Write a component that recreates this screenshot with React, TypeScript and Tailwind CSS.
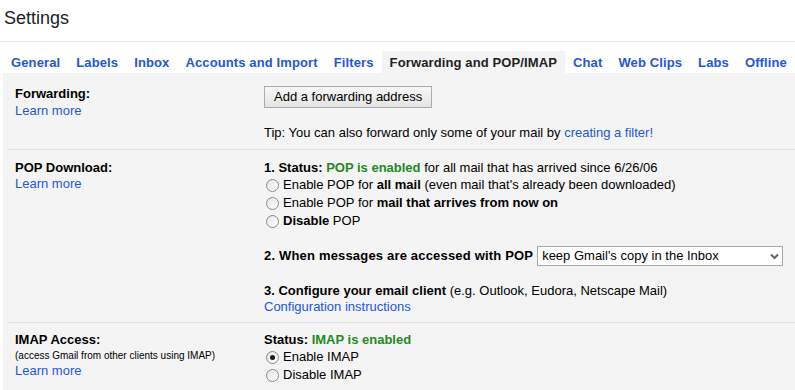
import * as React from 'react';

const tabs = [
	'General',
	'Labels',
	'Inbox',
	'Accounts and Import',
	'Filters',
	'Forwarding and POP/IMAP',
	'Chat',
	'Web Clips',
	'Labs',
	'Offline',
];

const Radio = ({ checked, children }: { checked?: boolean; children: React.ReactNode }) => (
	<div className="flex h-[18px] items-center">
		<span className="ml-[2px] flex h-[13px] w-[13px] items-center justify-center rounded-full border border-[#8a8a8a] bg-gradient-to-br from-[#e4e4e4] to-white">
			{checked && <span className="h-[5px] w-[5px] rounded-full bg-[#1a1a1a]" />}
		</span>
		<span className="ml-[4px] leading-[16px]">{children}</span>
	</div>
);

const Link = ({ children }: { children: React.ReactNode }) => (
	<span className="cursor-pointer text-[#2457d6]">{children}</span>
);

const Sep = () => <div className="ml-[4px] h-px bg-[#e2e2e2]" />;

export default function App() {
	return (
		<div className="h-[390px] w-[795px] overflow-hidden bg-white font-['Liberation_Sans',Arial,sans-serif] text-[13px] text-black">
			<h1 className="pl-[4px] pt-[8px] text-[18px] leading-[21px] text-[#222]">Settings</h1>
			<div className="mt-[12px] h-px bg-[#e5e5e5]" />

			<div className="ml-[3px] mt-[9px] flex tracking-[0.12px]">
				{tabs.map((t) => (
					<div
						key={t}
						className={
							t === 'Forwarding and POP/IMAP'
								? 'bg-[#f4f4f4] px-2 pb-[2px] pt-[4px] font-bold leading-[16px] text-[#222]'
								: 'cursor-pointer px-2 pb-[2px] pt-[4px] font-bold leading-[16px] text-[#2457d6]'
						}>
						{t}
					</div>
				))}
			</div>

			<div className="ml-[3px] bg-[#f4f4f4]">
				{/* forwarding */}
				<div className="grid grid-cols-[261px_1fr] pb-[8px] pt-[13px]">
					<div className="pl-[12px]">
						<div className="font-bold leading-[16px]">Forwarding:</div>
						<div className="leading-[17px]">
							<Link>Learn more</Link>
						</div>
					</div>
					<div>
						<button className="h-[22px] border border-[#ababab] bg-gradient-to-b from-[#f7f7f7] to-[#e4e4e4] px-[9px] leading-[16px] text-black">
							Add a forwarding address
						</button>
						<div className="mt-[17px] leading-[16px]">
							Tip: You can also forward only some of your mail by <Link>creating a filter!</Link>
						</div>
					</div>
				</div>
				<Sep />

				{/* pop */}
				<div className="grid grid-cols-[261px_1fr] pb-[7px] pt-[10px]">
					<div className="pl-[12px]">
						<div className="font-bold leading-[16px]">POP Download:</div>
						<div className="leading-[16px]">
							<Link>Learn more</Link>
						</div>
					</div>
					<div>
						<div className="leading-[16px]">
							<b>1. Status: </b>
							<b className="text-[#1f8a1f]">POP is enabled</b> for all mail that has arrived since 6/26/06
						</div>
						<Radio>
							Enable POP for <b>all mail</b> (even mail that's already been downloaded)
						</Radio>
						<Radio>
							Enable POP for <b>mail that arrives from now on</b>
						</Radio>
						<Radio>
							<b>Disable</b> POP
						</Radio>
						<div className="mt-[16px] flex h-[20px] items-center gap-[4px]">
							<b className="leading-[16px] tracking-[0.18px]">2. When messages are accessed with POP</b>
							<div className="flex h-[20px] w-[246px] items-center justify-between border border-[#a9a9a9] bg-white pl-[4px] pr-[3px]">
								<span className="leading-[16px]">keep Gmail's copy in the Inbox</span>
								<svg width="9" height="7" viewBox="0 0 9 7">
									<path d="M1 1.5 L4.5 5 L8 1.5" fill="none" stroke="#666" strokeWidth="2" />
								</svg>
							</div>
						</div>
						<div className="mt-[17px] leading-[16px]">
							<b>3. Configure your email client</b> (e.g. Outlook, Eudora, Netscape Mail)
						</div>
						<div className="leading-[16px]">
							<Link>Configuration instructions</Link>
						</div>
					</div>
				</div>
				<Sep />

				{/* imap */}
				<div className="grid grid-cols-[261px_1fr] pb-[10px] pt-[9px]">
					<div className="pl-[12px]">
						<div className="font-bold leading-[16px]">IMAP Access:</div>
						<div className="text-[10px] leading-[15px]">(access Gmail from other clients using IMAP)</div>
						<div className="leading-[16px]">
							<Link>Learn more</Link>
						</div>
					</div>
					<div>
						<div className="leading-[16px]">
							<b>Status: </b>
							<b className="text-[#1f8a1f]">IMAP is enabled</b>
						</div>
						<Radio checked>Enable IMAP</Radio>
						<Radio>Disable IMAP</Radio>
					</div>
				</div>
			</div>
		</div>
	);
}
